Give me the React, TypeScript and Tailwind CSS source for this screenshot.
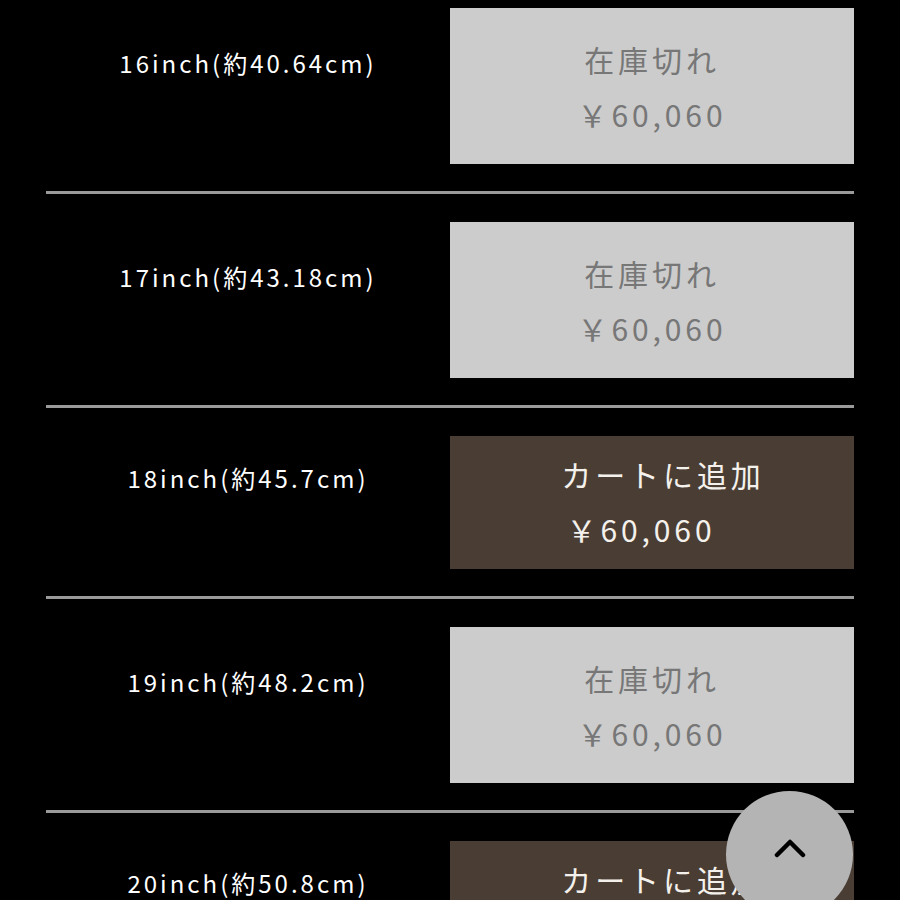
import React from "react";

type Row = { label: string; inStock: boolean };

const rows: Row[] = [
  { label: "16inch(約40.64cm)", inStock: false },
  { label: "17inch(約43.18cm)", inStock: false },
  { label: "18inch(約45.7cm)", inStock: true },
  { label: "19inch(約48.2cm)", inStock: false },
  { label: "20inch(約50.8cm)", inStock: true },
];

const font = { fontFamily: '"Noto Sans CJK JP", "Noto Sans", sans-serif' };

function RowItem({ row, first }: { row: Row; first: boolean }) {
  return (
    <div
      className={
        "flex items-start pb-[27px] " +
        (first ? "pt-[8px]" : "pt-[28px] border-t-[3px] border-[#9a9a9a]")
      }
    >
      <div
        className={
          "w-[404px] text-center text-white text-[24px] leading-[55px] tracking-[0.125em] " +
          (row.inStock ? "pt-[14px]" : "pt-[27px]")
        }
      >
        {row.label}
      </div>
      {row.inStock ? (
        <div className="w-[404px] bg-[#4a3d34] text-[#f4f1ec] text-[30px] leading-[55px] tracking-[0.13em] text-center pt-[11px] pb-[12px]">
          <div className="pl-[22px]">カートに追加</div>
          <div className="pr-[22px]">￥60,060</div>
        </div>
      ) : (
        <div className="w-[404px] bg-[#cccccc] text-[#777777] text-[30px] leading-[55px] tracking-[0.13em] text-center pt-[24px] pb-[22px]">
          <div>在庫切れ</div>
          <div>￥60,060</div>
        </div>
      )}
    </div>
  );
}

export default function App() {
  return (
    <div className="relative w-[900px] h-[900px] overflow-hidden bg-black" style={font}>
      <div className="px-[46px]">
        {rows.map((r, i) => (
          <RowItem key={i} row={r} first={i === 0} />
        ))}
      </div>
      <div className="absolute left-[726px] top-[791px] w-[127px] h-[127px] rounded-full bg-[#b4b4b4] flex items-start justify-center pt-[46px]">
        <svg width="32" height="22" viewBox="0 0 32 22">
          <polyline
            points="3,18 16,5 29,18"
            fill="none"
            stroke="#000"
            strokeWidth="4.5"
            strokeLinecap="round"
            strokeLinejoin="round"
          />
        </svg>
      </div>
    </div>
  );
}
